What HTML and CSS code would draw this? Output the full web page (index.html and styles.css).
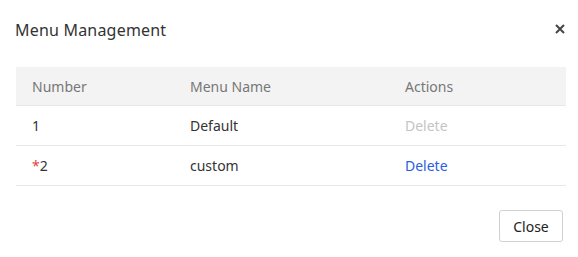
FILE: index.html
```html
<!DOCTYPE html>
<html lang="en">
<head>
    <meta charset="UTF-8">
    <meta name="viewport" content="width=device-width, initial-scale=1.0">
    <title>Menu Management</title>
    <link rel="stylesheet" href="styles.css">
</head>
<body>
    <div class="dialog">
        <div class="dialog-header">
            <span class="dialog-title">Menu Management</span>
            <svg class="dialog-close" width="10" height="10" viewBox="0 0 10 10">
                <path d="M1 1 L9 9 M9 1 L1 9" stroke="#444" stroke-width="2" fill="none"/>
            </svg>
        </div>

        <table class="menu-table">
            <thead>
                <tr>
                    <th class="col-num">Number</th>
                    <th class="col-name">Menu Name</th>
                    <th class="col-actions">Actions</th>
                </tr>
            </thead>
            <tbody>
                <tr>
                    <td>1</td>
                    <td>Default</td>
                    <td><span class="link disabled">Delete</span></td>
                </tr>
                <tr>
                    <td><span class="star">*</span>2</td>
                    <td>custom</td>
                    <td><span class="link">Delete</span></td>
                </tr>
            </tbody>
        </table>

        <div class="dialog-footer">
            <button class="btn">Close</button>
        </div>
    </div>
</body>
</html>
```

FILE: styles.css
```css
body, html {
    margin: 0;
    padding: 0;
    background-color: #ffffff;
    font-family: 'Noto Sans', 'Open Sans', sans-serif;
    color: #333;
}
.dialog {
    width: 578px;
    height: 257px;
    padding: 0 12px 0 16px;
    box-sizing: border-box;
}
.dialog-header {
    display: flex;
    justify-content: space-between;
    align-items: center;
    height: 60px;
    margin-left: -1px;
}
.dialog-title {
    font-size: 16px;
    color: #333;
    letter-spacing: 0.2px;
}
.dialog-close {
    margin-right: 1px;
    margin-top: -2px;
}
.menu-table {
    width: 550px;
    border-collapse: collapse;
    font-size: 14px;
    margin-top: 7px;
}
.menu-table th {
    background-color: #f3f3f3;
    font-weight: normal;
    color: #777;
    text-align: left;
    height: 38px;
    padding: 0 16px;
    border-bottom: 1px solid #e8e8e8;
}
.menu-table td {
    height: 39px;
    padding: 0 16px;
    border-bottom: 1px solid #e8e8e8;
    color: #333;
}
.col-num {
    width: 126px;
}
.col-name {
    width: 183px;
}
.link {
    color: #2b5de0;
}
.link.disabled {
    color: #c4c4c4;
}
.star {
    color: #e0443c;
}
.dialog-footer {
    display: flex;
    justify-content: flex-end;
    padding-top: 24px;
    padding-right: 3px;
}
.btn {
    width: 64px;
    height: 32px;
    border: 1px solid #d0d0d0;
    border-radius: 3px;
    background-color: #fff;
    font-family: inherit;
    font-size: 14px;
    color: #222;
}
```
